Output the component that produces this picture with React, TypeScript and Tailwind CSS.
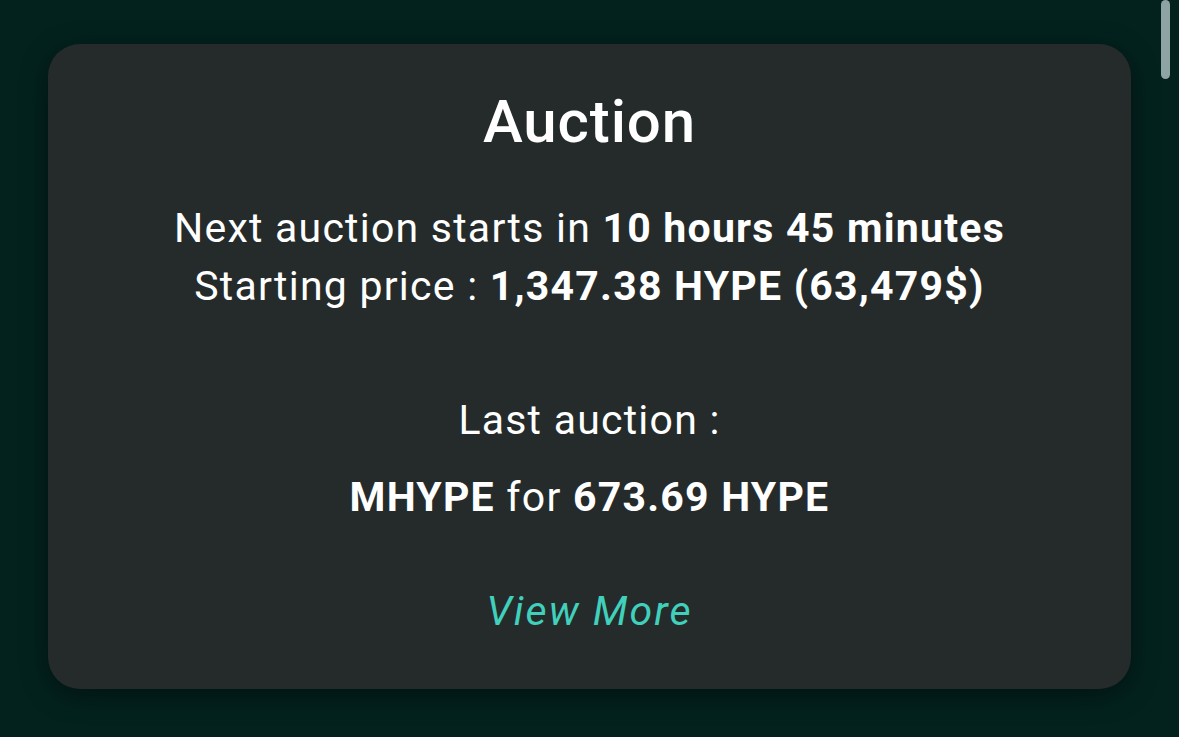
import React from "react";

export default function App() {
  return (
    <div className="relative min-h-[737px] w-full bg-[#03221e] font-['Roboto',_'Noto_Sans',_sans-serif] text-white overflow-hidden">
      <div className="absolute right-[9px] top-0 h-[79px] w-[9px] rounded-full bg-[#8ea3a3]" />
      <div className="pt-[44px] px-12">
        <div className="rounded-[32px] bg-[#252b2b] shadow-[0_6px_28px_rgba(0,0,0,0.45)] pt-[43px] pb-[48px] flex flex-col items-center text-center">
          <h1 className="text-[60px] leading-[70px] font-medium tracking-[0.015em]">Auction</h1>
          <div className="mt-[43px] text-[41px] leading-[57.5px] tracking-[0.03em]">
            <p>
              Next auction starts in <span className="font-bold">10 hours 45 minutes</span>
            </p>
            <p>
              Starting price : <span className="font-bold">1,347.38 HYPE (63,479$)</span>
            </p>
          </div>
          <p className="mt-[77px] text-[41px] leading-[57.5px] tracking-[0.03em]">Last auction :</p>
          <p className="mt-[19.5px] text-[41px] leading-[57.5px] tracking-[0.03em]">
            <span className="font-bold">MHYPE</span> for <span className="font-bold">673.69 HYPE</span>
          </p>
          <p className="mt-[56.5px] text-[41px] leading-[57.5px] tracking-[0.05em] italic text-[#40d0bb]">View More</p>
        </div>
      </div>
    </div>
  );
}
